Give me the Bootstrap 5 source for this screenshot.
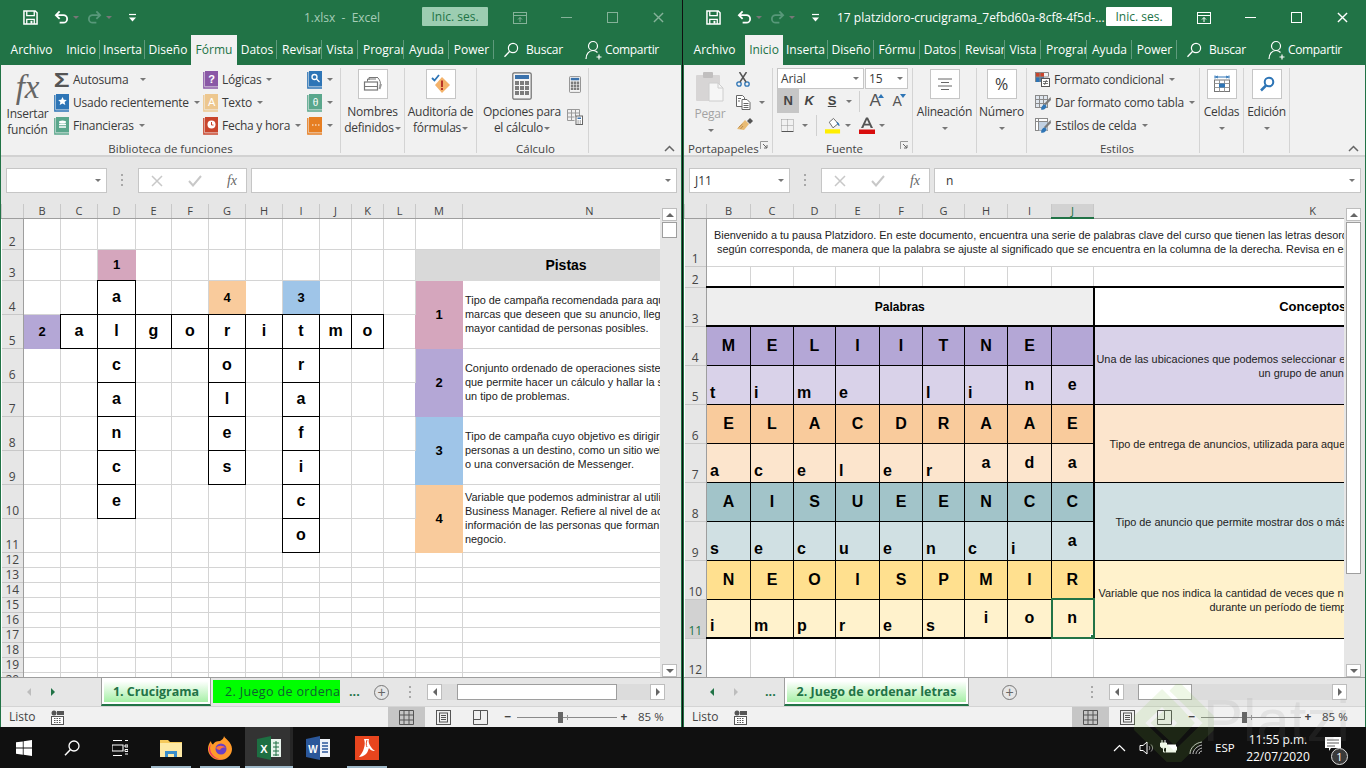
<!DOCTYPE html>
<html lang="es">
<head>
<meta charset="utf-8">
<title>Excel</title>
<link href="https://cdn.jsdelivr.net/npm/bootstrap@5.3.0/dist/css/bootstrap.min.css" rel="stylesheet">
<style>
html,body{margin:0;width:1366px;height:768px;overflow:hidden;background:#101010}
body{font-family:"Open Sans","Noto Sans",sans-serif;font-size:12px;color:#333;position:relative}
.desk{height:727px}
.win{height:727px;border:1px solid #217346;border-top-width:0;background:#f1f1f1;flex:none}
.win-a{width:682px;margin-right:1px}
.win-b{width:683px}
.ttlbar{height:35px;background:#217346;color:#fff;flex:none}
.qat{width:135px;flex:none;padding-left:22px;gap:0}
.qat svg{display:block;flex:none}
.wcrt{border-top-color:#fff}
.fade-g{color:#58987a}
.fade-c{border-top-color:#58987a}
.ttl{flex:1 1 0;white-space:nowrap;overflow:hidden;font-size:12px}
.ttl-a{padding-left:168px;color:#a6cdb8}
.ttl-b{padding-left:18px}
.signin{width:66px;height:19px;line-height:19px;text-align:center;border-radius:1px;font-size:12px;background:#fff;color:#217346;margin:0 9px 2px 0;flex:none}
.win-a .signin{background:#9ccdb1;color:#217346}
.wbtn{width:46px;height:35px;flex:none}
.fade-w{opacity:.45}
.tabsx{height:30px;background:#217346;flex:none;color:#fff}
.tabsx .nav{flex-wrap:nowrap}
.tabsx .nav-item{height:30px;line-height:30px;text-align:center;white-space:nowrap;overflow:hidden;position:relative;font-size:12px}
.tabsx .nav-item::after{content:"";position:absolute;right:0;top:5px;bottom:6px;width:1px;background:#5f9a7c}
.tabsx .nav-item:nth-child(1){width:61px}
.tabsx .nav-item:nth-child(1)::after{display:none}
.tabsx .nav-item:nth-child(2){width:38px}
.tabsx .nav-item:nth-child(3){width:45px}
.tabsx .nav-item:nth-child(4){width:46px}
.tabsx .nav-item:nth-child(5){width:46px}
.tabsx .nav-item:nth-child(6){width:40px}
.tabsx .nav-item:nth-child(7){width:45px;text-align:left;padding-left:5px}
.tabsx .nav-item:nth-child(8){width:36px}
.tabsx .nav-item:nth-child(9){width:46px;text-align:left;padding-left:5px}
.tabsx .nav-item:nth-child(10){width:45px}
.tabsx .nav-item:nth-child(11){width:45px}
.tabsx .nav-item.on{background:#f1f1f1;color:#217346}
.tabsx .nav-item.on::after,.tabsx .nav-item.preon::after{display:none}
.srch{margin-left:9px;width:82px;gap:7px;flex:none;letter-spacing:-.2px}
.shr{gap:2px;flex:none;letter-spacing:-.35px}
.rib{height:92px;background:#f1f1f1;border-bottom:2px solid #d2d2d2;flex:none;padding-top:3px;position:relative;white-space:nowrap;color:#3a3a3a;letter-spacing:-.25px}
.grp{height:85px;border-right:1px solid #d4d4d4;flex:none;position:relative}
.gbody{height:73px}
.glab{height:16px;line-height:16px;text-align:center;font-size:11.5px;color:#444;letter-spacing:0}
.g1{width:340px}.g2{width:64px}.g3{width:72px}.g4{width:112px;padding-left:6px}
.g5{width:89px}.g6{width:140px}.g7{width:64px}.g8{width:50px}.g9{width:173px}.g10{width:44px}.g11{width:46px}
.big{line-height:16px;text-align:center;font-size:12px}
.bigbox{width:30px;height:30px;background:#fff;border:1px solid #c6c6c6;margin:1px auto 5px;display:flex;align-items:center;justify-content:center}
.fxbig{font-family:"Liberation Serif",serif;font-style:italic;font-size:33px;line-height:38px;height:38px;color:#666;display:block}
.col1{width:53px;text-align:center;line-height:16px;flex:none}
.rrow{height:23px;gap:4px;flex:none}
.rrow svg{flex:none}
.stack{flex:none}
.w149{width:149px}.w104{width:104px}
.sig{font-family:"Liberation Sans",sans-serif;font-weight:700;font-size:21px;line-height:20px;color:#555;width:15px;text-align:center;display:inline-block;transform:scaleX(1.25)}
.crt{display:inline-block;width:0;height:0;border-left:3px solid transparent;border-right:3px solid transparent;border-top:3px solid #777;flex:none;margin-left:1px;vertical-align:middle}
.chev{position:absolute;right:6px;bottom:3px;display:block}
.lnch{position:absolute;right:3px;bottom:3px;display:block}
.fbk-blue{color:#2e75b6}.fbk-green{color:#5aa78c}.fbk-purple{color:#8a58a6}.fbk-beige{color:#edc78f}.fbk-red{color:#c9452c}.fbk-orange{color:#e67e22}
.col-calc{flex:none}
.calc2{margin-left:6px}
.col-paste{width:52px;flex:none;color:#a3a3a3}
.paste-i{margin:4px auto 4px;opacity:.85}
.combo{height:21px;background:#fff;border:1px solid #c6c6c6;padding:0 4px 0 3px;flex:none;font-size:12px;letter-spacing:-.1px}
.cb-a{width:87px}.cb-b{width:43px;margin-left:1px}
.fbtn{height:24px;font-family:"Liberation Sans",sans-serif;font-weight:700;font-size:13px;color:#444;flex:none;text-align:center;line-height:24px}
.fn{width:22px;background:#c6c6c6}
.fk{width:20px;font-style:italic}
.fs{width:26px;text-decoration:underline}
.vsep{width:1px;height:21px;background:#d0d0d0;flex:none}
.fsep1{margin-left:7px}
.fbtn.fa1{width:12px;margin-left:9px;font-weight:400;font-size:17px;color:#555}
.fbtn.fa2{width:12px;margin-left:7px;font-weight:400;font-size:14px;color:#555}
.fup{align-self:flex-start;margin-top:5px;margin-left:-3px;flex:none}
.rowf{height:24px}
.rowf .crt1{margin-left:8px}
.fbar{height:47px;background:#e6e6e6;flex:none;padding:11px 4px 0 5px}
.namebox{width:101px;height:25px;background:#fff;border:1px solid #c6c6c6;padding:0 5px;font-size:12px;flex:none}
.dots3{width:31px;height:25px;flex:none}
.fxbox{width:109px;height:25px;background:#fff;border:1px solid #c6c6c6;flex:none;padding:0 9px 0 12px;margin-right:4px}
.fx-i{color:#c8c8c8}
.fxsm{font-family:"Liberation Serif",serif;font-style:italic;font-size:14px;color:#666}
.finput{height:25px;background:#fff;border:1px solid #c6c6c6;flex:1 1 0;padding:0 5px 0 11px;font-size:12px}
.sheetwrap{height:473px;flex:none;overflow:hidden}
.xclip{overflow:hidden;height:473px;flex:1 1 0}
table.xg{table-layout:fixed;border-collapse:collapse;font-family:"Liberation Sans",sans-serif;background:#fff;color:#000}
.xg td,.xg th{padding:0;border:1px ridge #d4d4d4;overflow:hidden;white-space:nowrap;line-height:1;font-weight:400}
.xg th{background:#e6e6e6;color:#444;font-family:"Open Sans",sans-serif;font-size:11px}
.xg th.ch{text-align:center;vertical-align:middle;border-color:#c8c8c8;border-top:0;border-bottom:1px solid #9e9e9e;height:14px}
.xg th.rh{text-align:center;vertical-align:bottom;border-color:#c8c8c8;border-left:0;border-right:1px solid #9e9e9e;font-size:12px;line-height:14px}
.xg th.act{background:#d2d2d2;color:#217346}
.xg th.ch.act{border-bottom:2px solid #217346}
.xa col:nth-child(1){width:22px}.xa col:nth-child(2){width:37px}.xa col:nth-child(3){width:37px}.xa col:nth-child(4){width:38px}
.xa col:nth-child(5){width:36px}.xa col:nth-child(6){width:37px}.xa col:nth-child(7){width:37px}.xa col:nth-child(8){width:37px}
.xa col:nth-child(9){width:37px}.xa col:nth-child(10){width:32px}.xa col:nth-child(11){width:32px}.xa col:nth-child(12){width:32px}
.xa col:nth-child(13){width:47px}.xa col:nth-child(14){width:254px}
.xa{width:715px}
.xb col:nth-child(1){width:22px}.xb col:nth-child(2){width:44px}.xb col:nth-child(3){width:43px}.xb col:nth-child(4){width:42px}
.xb col:nth-child(5){width:44px}.xb col:nth-child(6){width:43px}.xb col:nth-child(7){width:42px}.xb col:nth-child(8){width:43px}
.xb col:nth-child(9){width:44px}.xb col:nth-child(10){width:42px}.xb col:nth-child(11){width:438px}
.xb{width:847px}
.h14{height:14px}.h21{height:21px}.h31{height:31px}.h34{height:34px}.h39{height:39px}.h48{height:48px}
.xg td.lt{font-weight:700;font-size:16px;text-align:center;vertical-align:middle}
.xg td.bx{border:1px solid #000}
.xg td.nm{font-weight:700;font-size:13px;text-align:center;vertical-align:middle}
.xg td.lf{text-align:left;vertical-align:bottom;padding-left:3px;padding-bottom:3px}
.xg td.tx{font-size:10.9px;line-height:14px;padding-left:2px;vertical-align:middle;text-align:left;color:#222}
.xg td.txk{font-size:10.9px;line-height:14px;padding-top:2px;vertical-align:middle;text-align:left;color:#222}
.txk span{display:block}
.mk3{margin-left:2px}.mk165{margin-left:164px}.mk16{margin-left:15px}.mk22{margin-left:21px}.mk5{margin-left:4px}.mk116{margin-left:115px}
.xg td.ttc{font-size:10.9px;line-height:14px;padding-left:7px;vertical-align:middle;text-align:left;color:#222}
.line2{margin-left:3px}
.xg td.hd{font-weight:700;font-size:14px;text-align:center;vertical-align:middle}
.xb td.pal{font-size:12px}
.xb td.cpt{font-size:13px}
.pnk{background:#d5a6bd}.pur{background:#b4a7d6}.blu{background:#9fc5e8}.org{background:#f9cb9c}.gry{background:#d9d9d9}
.xg td.pnk{border-color:#d5a6bd}.xg td.pur{border-color:#b4a7d6}.xg td.blu{border-color:#9fc5e8}.xg td.org{border-color:#f9cb9c}.xg td.gry{border-color:#d9d9d9}
.xg td.pur2{background:#d9d2e9}.xg td.org2{background:#fce5cd}.xg td.tea{background:#a2c4c9}.xg td.tea2{background:#d0e0e3}.xg td.yel{background:#ffe08f}.xg td.yel2{background:#fff2cc}
.xb td.pur,.xb td.org,.xb td.tea,.xb td.tea2,.xb td.pur2,.xb td.org2,.xb td.yel,.xb td.yel2{border:1px solid #000}
.xb td.gy2{background:#eee;border-color:#000}
.xg td.tt{border-top:2px solid #000}
.xg td.tb{border-bottom:2px solid #000}
.xg td.rr{border-right:2px solid #000}
.xg td.ll{border-left:2px solid #000}
.xg td.sel{position:relative;outline:2px solid #217346;outline-offset:-1px}
.handle{position:absolute;right:-3px;bottom:-3px;width:6px;height:6px;background:#217346;border:1px solid #fff}
.selwrap{position:relative;display:block;line-height:1}
.vbar{width:21px;flex:none;background:#e6e6e6;padding:4px 2px 0 2px;height:473px}
.sbtn{width:15px;height:13px;background:#fff;border:1px solid #bdbdbd;flex:none}
.vthumb{width:15px;background:#fff;border:1px solid #9e9e9e;margin-top:1px;flex:none}
.vt-a{height:16px}.vt-b{height:352px}
.spacer{flex:1 1 0}
.tri-u{border-left:4px solid transparent;border-right:4px solid transparent;border-bottom:4px solid #666;width:0;height:0}
.tri-d{border-left:4px solid transparent;border-right:4px solid transparent;border-top:4px solid #666;width:0;height:0}
.tri-l{border-top:4px solid transparent;border-bottom:4px solid transparent;border-right:4px solid #666;width:0;height:0}
.tri-r{border-top:4px solid transparent;border-bottom:4px solid transparent;border-left:4px solid #666;width:0;height:0}
.tri-l.tgo{border-right-color:#217346}.tri-r.tgo{border-left-color:#217346}
.tri-l.tfd{border-right-color:#bdbdbd}.tri-r.tfd{border-left-color:#bdbdbd}
.tabbar{height:29px;background:#e6e6e6;border-top:1px solid #9e9e9e;flex:none;font-size:12.5px;position:relative}
.arrsx{gap:20px;padding-left:26px;flex:none;width:100px}
.arrsx .ell{margin-left:7px}
.stab{height:28px;margin-top:-1px;background:#fff;border-left:1px solid #9e9e9e;border-right:1px solid #9e9e9e;border-bottom:2px solid #217346;padding:3px 2px 1px;flex:none}
.stab span{display:block;height:21px;line-height:21px;text-align:center;background:linear-gradient(#fff,#a6f0a6);color:#217346;font-weight:700;white-space:nowrap}
.st-a{width:110px}.st-b{width:185px}
.gtab{width:127px;height:23px;line-height:23px;background:#00ff00;color:#0f5f30;margin:0 9px 3px 2px;flex:none;padding-left:12px;overflow:hidden;white-space:nowrap;align-self:flex-end;letter-spacing:.35px}
.ell{color:#217346;font-weight:700;flex:none;line-height:20px}
.ell-a{width:25px}
.plus{width:15px;height:15px;border:1px solid #777;border-radius:50%;color:#666;text-align:center;line-height:12px;font-size:14px;flex:none;font-family:"Liberation Sans",sans-serif}
.pl-b{margin-left:33px}
.dotsv{width:3px;flex:none;display:block}
.dv-a{margin-left:20px;margin-right:15px}
.dv-b{margin-left:74px;margin-right:15px}
.hsb{height:16px;flex:none;background:#dcdcdc;width:238px}
.hsb-btn{width:15px;height:16px;background:#fff;border:1px solid #bdbdbd;flex:none}
.hthumb{height:16px;background:#fff;border:1px solid #9e9e9e;flex:none}
.ht-a{width:160px;margin-left:15px;margin-right:33px}
.ht-b{width:54px;margin-left:14px;margin-right:140px}
.stbar{height:21px;background:#f1f1f1;border-top:1px solid #d4d4d4;flex:none;font-size:12px;color:#444}
.mcr-i{margin-left:15px;flex:none}
.vw{width:37px;height:21px;flex:none}
.vw-on{background:#c6c6c6}
.slider{width:100px;height:1px;background:#8a8a8a;position:relative;flex:none}
.slthumb{position:absolute;left:41px;top:-5px;width:5px;height:11px;background:#666}
.sltick{position:absolute;left:50px;top:-2px;width:1px;height:5px;background:#999}
.zm{width:18px;text-align:center;flex:none;font-weight:700}
.zp{width:14px;text-align:center;flex:none;font-weight:700}
.zv{width:28px;margin:0 15px 0 7px;white-space:nowrap;font-size:11.5px;flex:none}
.taskb{height:41px;background:#101010;color:#fff;position:relative}
.tk{width:48px;height:41px;flex:none;position:relative}
.tk-on{background:#333;box-shadow:inset -3px 0 #262626;margin-left:1px}
.tk-u::after{content:"";position:absolute;left:4px;right:4px;bottom:0;height:2px;background:#9fb9c9}
.tk-on::after{left:0;right:0}
.tk-m3{margin-left:3px}.tk-m1{margin-left:1px}
.tray{font-size:12px}
.tr-a{margin-right:13px}.tr-b{margin-right:5px}.tr-c{margin-right:12px}
.esp{width:23px;font-size:11.5px;flex:none}
.clock{text-align:center;line-height:17px;font-size:12px;width:80px}
.ntf{position:relative;width:48px;height:41px;padding-right:18px}
.ntfb{position:absolute;left:13px;top:21px;width:17px;height:17px;border-radius:50%;background:#3a3a3a;border:1px solid #ddd;font-size:11px;line-height:15px;text-align:center}
.wm{position:absolute;left:1130px;top:684px;width:236px;height:84px;pointer-events:none;overflow:hidden}
.wmt{position:absolute;left:73px;top:-3px;font-family:"Liberation Sans",sans-serif;font-size:60px;line-height:80px;color:rgba(130,130,130,.13)}
.wmd{position:absolute;left:4px;top:0}
</style>
</head>
<body>
<svg width="0" height="0" class="position-absolute">
<symbol id="save" viewBox="0 0 16 16"><path d="M1 1h12l2 2v12H1z" fill="none" stroke="#fff" stroke-width="1.6"/><path d="M4 1v5h8V1M4 15v-5h8v5" fill="none" stroke="#fff" stroke-width="1.4"/><rect x="8" y="11.5" width="2" height="3" fill="#fff"/></symbol>
<symbol id="undo" viewBox="0 0 16 16"><path d="M6 1.5 2 5.5l4 4M2.500 5.500H10a4 4 0 0 1 0 8H6" fill="none" stroke="currentColor" stroke-width="1.9"/></symbol>
<symbol id="redo" viewBox="0 0 16 16"><path d="M10 1.5l4 4-4 4M13.500 5.500H6a4 4 0 0 0 0 8h4" fill="none" stroke="currentColor" stroke-width="1.9"/></symbol>
<symbol id="qatc" viewBox="0 0 9 9"><path d="M1 1.500h7" stroke="#fff" stroke-width="1.2"/><path d="M1 4.500h7L4.500 8.500z" fill="#fff"/></symbol>
<symbol id="lens" viewBox="0 0 16 16"><circle cx="10" cy="6" r="4.600" fill="none" stroke="#fff" stroke-width="1.2"/><path d="M6.700 9.300 1.500 14.800" stroke="#fff" stroke-width="1.300"/></symbol>
<symbol id="user" viewBox="0 0 18 20"><circle cx="8" cy="6" r="4.500" fill="none" stroke="#fff" stroke-width="1.200"/><path d="M1 19c0-5 3-8.500 7-8.500 2 0 3.500.8 4.500 2" fill="none" stroke="#fff" stroke-width="1.200"/><path d="M14 14.500v5M11.500 17h5" stroke="#fff" stroke-width="1.200"/></symbol>
<symbol id="ribd" viewBox="0 0 14 14"><rect x=".5" y="1.500" width="13" height="11" fill="none" stroke="currentColor"/><path d="M1 4.500h12M7 11V6.500M5 8.500l2-2 2 2" fill="none" stroke="currentColor"/></symbol>
<symbol id="book" viewBox="0 0 15 18"><path d="M.8 1v16H15" fill="none" stroke="currentColor" stroke-width="1.300"/><rect x="2" y="0" width="13" height="15.500" fill="currentColor"/></symbol>
<symbol id="names" viewBox="0 0 20 18"><path d="M6 5V2.500h9M4.500 6.500V4H13M15 3c2 2 3 5 2 8" fill="none" stroke="#777"/><rect x="1.500" y="7" width="13" height="8" fill="#fff" stroke="#777" stroke-width="1.200"/><path d="M1.500 11.500h13" stroke="#777"/><path d="M16.500 14l1.500-5" stroke="#999" stroke-width="2"/></symbol>
<symbol id="audit" viewBox="0 0 20 20"><path d="M1 4l2.500 2.500L8 1" fill="none" stroke="#2e75b6" stroke-width="1.800"/><path d="M11 3l8 8-8 8-7-8z" fill="#f4b26a"/><rect x="10" y="6.500" width="2" height="6.500" fill="#b8342a"/><rect x="10" y="14" width="2" height="2" fill="#b8342a"/></symbol>
<symbol id="calc" viewBox="0 0 20 28"><rect x=".8" y=".8" width="18.400" height="26.400" rx="1.500" fill="#f4f4f4" stroke="#6f6f6f" stroke-width="1.200"/><rect x="3" y="3" width="14" height="4" fill="#3b72ac"/><path d="M3 9h4v4H3zM8 9h4v4H8zM13 9h4v4h-4zM3 14h4v4H3zM8 14h4v4H8zM13 14h4v4h-4zM3 19h4v4H3zM8 19h4v4H8zM13 19h4v4h-4z" fill="#7c7c7c"/></symbol>
<symbol id="calcg" viewBox="0 0 16 16"><path d="M.5.5h12v9M.5.5v11h7M.5 4h12M.5 8h7M4.500.5v11M8.500.5v7" fill="none" stroke="#999"/><rect x="9" y="7" width="6.500" height="8.500" fill="#fff" stroke="#666"/><rect x="10.500" y="8.500" width="3.500" height="1.500" fill="#3b72ac"/><path d="M10.500 11.500h1.200v1h-1.200zM12.700 11.500h1.200v1h-1.200zM10.500 13.500h1.200v1h-1.200zM12.700 13.500h1.200v1h-1.200z" fill="#666"/></symbol>
<symbol id="paste" viewBox="0 0 28 30"><rect x="0" y="3" width="24" height="26" rx="1" fill="#d3d1d1"/><rect x="7" y="0" width="10" height="6" rx="1" fill="#b9b7b7"/><path d="M13 11h9l5 5v13H13z" fill="#f7f7f7" stroke="#c8c8c8"/><path d="M22 11v5h5" fill="none" stroke="#c8c8c8"/></symbol>
<symbol id="scis" viewBox="0 0 14 15"><circle cx="3" cy="12" r="2.200" fill="none" stroke="#2e75b6" stroke-width="1.300"/><circle cx="11" cy="12" r="2.200" fill="none" stroke="#2e75b6" stroke-width="1.300"/><path d="M4 10 10.500 0M10 10 3.500 0" stroke="#555" stroke-width="1.500"/></symbol>
<symbol id="copy" viewBox="0 0 15 15"><path d="M.5.500h6l2 2v9h-8z" fill="#fff" stroke="#666"/><path d="M6 4.500h5l3 3v7H6z" fill="#fff" stroke="#666"/><path d="M2 3.500h3M2 6h2M7.500 8.500h5M7.500 10.500h5M7.500 12.500h5" stroke="#666"/></symbol>
<symbol id="brush" viewBox="0 0 17 15"><path d="M9 2 13 6 8 12 1 11z" fill="#e8bb74"/><path d="M11 3 14 0l3 3-3 3z" fill="#555"/><path d="M2.500 9.500 6.500 6M4.500 11 7 8" stroke="#b8884a"/></symbol>
<symbol id="bord" viewBox="0 0 13 13"><path d="M.5 12.500h12" stroke="#555"/><path d="M.5.500h12v12M.5.500v12M6.500.500v12M.5 6.500h12" fill="none" stroke="#999" stroke-dasharray="1 1"/></symbol>
<symbol id="fill" viewBox="0 0 17 17"><path d="M4.500 5 9 1l5 5.500-5.500 4.500z" fill="#fff" stroke="#666"/><path d="M12 4.500c2 .5 3.500 2 3.500 4.500-1.500 0-2.500-2-3.500-4.500z" fill="#2e75b6"/><rect x="0" y="12.500" width="16" height="4.500" fill="#ffee00"/></symbol>
<symbol id="fcol" viewBox="0 0 16 17"><path d="M2 11 7 0.500h2L14 11h-2.300l-1-2.500H5.300L4.300 11zM6.100 6.700h3.800L8 2.700z" fill="#555"/><rect x="0" y="12.500" width="16" height="4.500" fill="#d80d0d"/></symbol>
<symbol id="alng" viewBox="0 0 14 12"><path d="M0 1h14M3 4.500h8M0 8h14M3 11.500h8" stroke="#666" stroke-width="1"/></symbol>
<symbol id="cfmt" viewBox="0 0 15 15"><rect x="0" y="0" width="9" height="5" fill="#c9452c"/><rect x="0" y="5" width="9" height="5" fill="#2e75b6"/><path d="M.5.500h13v4M.5 5h13M5 .5v9.500M.5.500v9.500" fill="none" stroke="#888"/><rect x="6.500" y="6.500" width="8" height="8" fill="#fff" stroke="#555"/><path d="M8 9.500h5M8 11.500h5M11.500 8l-2 5" stroke="#555" stroke-width=".8"/></symbol>
<symbol id="tfmt" viewBox="0 0 16 16"><rect x=".5" y=".5" width="12" height="12" fill="#dfe6ee" stroke="#8a8a8a"/><path d="M.5 4.500h12M.5 8.500h12M4.500.5v12M8.500.5v12" stroke="#8a8a8a"/><path d="M15.500 2 9 9l1.500 1.500L16 5z" fill="#7c7c7c"/><path d="M10 9.500c-2 0-4 2-4 5 3 1 5.500-1.500 5.500-3.500z" fill="#2e75b6"/></symbol>
<symbol id="sfmt" viewBox="0 0 16 16"><rect x=".5" y=".5" width="12" height="12" fill="#fff" stroke="#8a8a8a"/><path d="M.5 3.500h12M3.500.5v12" stroke="#8a8a8a"/><rect x="4" y="4" width="8.500" height="8.500" fill="#c2d2e4"/><path d="M15.500 2 9 9l1.500 1.500L16 5z" fill="#7c7c7c"/><path d="M10 9.500c-2 0-4 2-4 5 3 1 5.500-1.500 5.500-3.500z" fill="#2e75b6"/></symbol>
<symbol id="cell" viewBox="0 0 16 18"><path d="M1 2h14M1 .5v3M15 .5v3M4 1l-2 1 2 1M12 1l2 1-2 1" fill="none" stroke="#2e75b6"/><rect x=".5" y="5" width="15" height="11.500" fill="#fff" stroke="#777"/><path d="M.5 8.500h15M.5 12.500h15M5.500 5v11.500M10.500 5v11.500" stroke="#999"/><rect x="5" y="8.500" width="6" height="4" fill="#2e75b6"/></symbol>
<symbol id="find" viewBox="0 0 16 16"><circle cx="10" cy="6" r="4.300" fill="none" stroke="#2e75b6" stroke-width="2"/><path d="M7 9.500 2 14.500" stroke="#2e75b6" stroke-width="2.500"/></symbol>
<symbol id="launch" viewBox="0 0 9 9"><path d="M.5 8V.5H8" fill="none" stroke="#999"/><path d="M3 3l4 4M7 4v3H4" fill="none" stroke="#666"/></symbol>
<symbol id="up" viewBox="0 0 11 7"><path d="M1 6 5.500 1.500 10 6" fill="none" stroke="#666" stroke-width="1.500"/></symbol>
<symbol id="x" viewBox="0 0 12 12"><path d="M1 1l10 10M11 1 1 11" stroke="currentColor" stroke-width="1.500"/></symbol>
<symbol id="chk" viewBox="0 0 14 12"><path d="M1 6l4 4.500L13 1" fill="none" stroke="currentColor" stroke-width="2"/></symbol>
<symbol id="vd3" viewBox="0 0 3 13"><rect x="0" y="0" width="2" height="2" fill="#a8a8a8"/><rect x="0" y="5" width="2" height="2" fill="#a8a8a8"/><rect x="0" y="10" width="2" height="2" fill="#a8a8a8"/></symbol>
<symbol id="mcr" viewBox="0 0 13 15"><circle cx="3" cy="3" r="2.500" fill="#555"/><rect x="6" y="1" width="7" height="4" fill="#555"/><rect x=".5" y="6.500" width="12" height="8" fill="#fff" stroke="#555"/><path d="M3 8.500h7M3 10.500h7M3 12.500h7" stroke="#555" stroke-dasharray="1.500 1"/></symbol>
<symbol id="vnorm" viewBox="0 0 15 15"><path d="M.5.5h14v14H.5zM.5 5h14M.5 10h14M5 .5v14M10 .5v14" fill="none" stroke="#555"/></symbol>
<symbol id="vpage" viewBox="0 0 15 15"><rect x=".5" y=".5" width="14" height="14" fill="none" stroke="#555"/><rect x="3.500" y="3" width="8" height="9" fill="none" stroke="#555"/><path d="M5 5.500h5M5 7.500h5M5 9.500h5" stroke="#555"/></symbol>
<symbol id="vbrk" viewBox="0 0 15 15"><path d="M.5.5h14v14H.5zM.5 9.500h7M7.500.5v9" fill="none" stroke="#555"/></symbol>
<symbol id="winl" viewBox="0 0 16 16"><path d="M0 2.300 6.800 1.400v6.200H0zM7.600 1.300 16 0v7.600H7.600zM0 8.400h6.800v6.300L0 13.800zM7.600 8.400H16V16l-8.400-1.200z" fill="#fff"/></symbol>
<symbol id="srch" viewBox="0 0 16 16"><circle cx="10" cy="6" r="5" fill="none" stroke="#fff" stroke-width="1.300"/><path d="M6.500 9.500 1 15.300" stroke="#fff" stroke-width="1.500"/></symbol>
<symbol id="tv" viewBox="0 0 16 16"><path d="M1 .5h9M1 15.500h9M0 5h11v6H0z" fill="none" stroke="#fff" stroke-width="1.100"/><path d="M13 .5h3M13 5h3v2h-3zM13 9.500h3v2h-3zM13 14h3" fill="none" stroke="#fff" stroke-width="1"/></symbol>
<symbol id="fold" viewBox="0 0 22 20"><path d="M0 2h8l2 2h12v14H0z" fill="#f5c95c"/><rect x="0" y="5" width="22" height="14" fill="#fde9a5"/><path d="M5 19v-6h12v6h-3v-3H8v3z" fill="#3a8ecb"/></symbol>
<symbol id="ffx" viewBox="0 0 24 24"><path d="M16 0c1 3 8 6 8 13a12 11 0 0 1-24 0c0-3 1-6 3-8 0 2 1 3 2 3.500C6 6 9 5 12 5c2-1 4-3 4-5z" fill="#ff9a2a"/><path d="M3 8a12 11 0 0 0 13 15c-7 2-15-3-15-10 0-2 1-4 2-5z" fill="#ee2f66"/><circle cx="13" cy="13" r="5.500" fill="#6a3fc4"/><path d="M8 12c2-3 7-3 10 0-3-1-5 0-6 2-2 0-3-1-4-2z" fill="#ff7139"/></symbol>
<symbol id="xls" viewBox="0 0 24 24"><path d="M0 3 14 0v24L0 21z" fill="#1d6f42"/><rect x="14" y="3" width="10" height="18" fill="#e8f3ec"/><path d="M16 7h6M16 11h6M16 15h6M16 19h6M19 5v15" stroke="#1d6f42" stroke-width="1"/></symbol>
<symbol id="wrd" viewBox="0 0 24 24"><path d="M0 3 14 0v24L0 21z" fill="#2b579a"/><rect x="14" y="3" width="10" height="18" fill="#eef2f8"/><path d="M16 7h6M16 10h6M16 13h6M16 16h6" stroke="#2b579a" stroke-width="1.300"/></symbol>
<symbol id="acro" viewBox="0 0 24 24"><rect width="24" height="24" fill="#e8451e"/><path d="M4 21c2-3 4-5 5-9 1-3 1-6 0-9h5c-1 3 0 5 2 8 1 2 3 3 4 4-3 0-5-1-6-3-1 2-1 4-3 6-2 2-5 3-7 3z" fill="#fff"/><path d="M12 4c-1 3-1 5 0 7" stroke="#e8451e" fill="none"/></symbol>
<symbol id="spk" viewBox="0 0 16 16"><path d="M1 5.500h3L8 2v12L4 10.500H1z" fill="none" stroke="#fff"/><path d="M10 6c1 1 1 3 0 4M12 4.500c2 2 2 5 0 7" fill="none" stroke="#999"/></symbol>
<symbol id="plug" viewBox="0 0 17 15"><path d="M2 0v3M5 0v3M.5 3h6v3c0 1-1 2-3 2s-3-1-3-2z" fill="#fff" stroke="#fff"/><path d="M3.500 8v4h2" fill="none" stroke="#fff"/><rect x="6" y="4.500" width="10" height="8" fill="#fff"/><rect x="16" y="6.500" width="1" height="4" fill="#fff"/></symbol>
<symbol id="wifi" viewBox="0 0 14 14"><path d="M1 13C1 7 6 2 13 1M4 13c0-4 4-8 9-9M7 13c0-2 2-5 6-6M10 13c0-1 1-3 3-3" fill="none" stroke="#ddd" stroke-width=".9"/></symbol>
<symbol id="note" viewBox="0 0 16 14"><path d="M0 0h16v11H6l-2 3v-3H0z" fill="#fff"/><path d="M2 3h12M2 6h12M2 9h8" stroke="#333" stroke-width=".8"/></symbol>
</svg>

<div class="desk d-flex">
<!-- LEFT WINDOW -->
<section class="win win-a d-flex flex-column">
 <div class="ttlbar d-flex align-items-center">
  <div class="qat d-flex align-items-center">
   <svg width="15" height="15"><use href="#save"/></svg>
   <svg width="15" height="15" class="text-white ms-3"><use href="#undo"/></svg>
   <span class="crt ms-1 wcrt"></span>
   <svg width="15" height="15" class="ms-2 fade-g"><use href="#redo"/></svg>
   <span class="crt ms-1 fade-c"></span>
   <svg width="9" height="9" class="ms-3"><use href="#qatc"/></svg>
  </div>
  <div class="ttl ttl-a">1.xlsx &nbsp;-&nbsp; Excel</div>
  <div class="signin">Inic. ses.</div>
  <div class="wbtn d-flex align-items-center justify-content-center fade-w"><svg width="14" height="14" class="text-white"><use href="#ribd"/></svg></div>
  <div class="wbtn d-flex align-items-center justify-content-center fade-w"><svg width="11" height="2" class="text-white"><rect width="11" height="1" fill="#fff"/></svg></div>
  <div class="wbtn d-flex align-items-center justify-content-center fade-w"><svg width="11" height="11"><rect x=".5" y=".5" width="10" height="10" fill="none" stroke="#fff"/></svg></div>
  <div class="wbtn d-flex align-items-center justify-content-center fade-w"><svg width="11" height="11" class="text-white"><use href="#x"/></svg></div>
 </div>
 <div class="tabsx d-flex">
  <ul class="nav list-unstyled m-0">
   <li class="nav-item">Archivo</li><li class="nav-item">Inicio</li><li class="nav-item">Inserta</li><li class="nav-item preon">Diseño</li><li class="nav-item on">Fórmu</li><li class="nav-item">Datos</li><li class="nav-item">Revisar</li><li class="nav-item">Vista</li><li class="nav-item">Program</li><li class="nav-item">Ayuda</li><li class="nav-item">Power</li>
  </ul>
  <div class="srch d-flex align-items-center"><svg width="16" height="16"><use href="#lens"/></svg><span>Buscar</span></div>
  <div class="shr d-flex align-items-center"><svg width="18" height="20"><use href="#user"/></svg><span>Compartir</span></div>
 </div>
 <div class="rib d-flex">
  <div class="grp g1">
   <div class="gbody d-flex">
    <div class="col1 big"><span class="fxbig">fx</span><div>Insertar<br>función</div></div>
    <div class="stack w149">
     <div class="rrow d-flex align-items-center"><span class="sig">Σ</span><span>Autosuma</span><span class="crt ms-2"></span></div>
     <div class="rrow d-flex align-items-center"><svg width="15" height="18" class="fbk-blue"><use href="#book"/><path d="M8.500 3l1.300 2.700 3 .3-2.200 2 .7 3-2.800-1.600L5.700 11l.7-3-2.200-2 3-.3z" fill="#fff"/></svg><span>Usado recientemente</span><span class="crt"></span></div>
     <div class="rrow d-flex align-items-center"><svg width="15" height="18" class="fbk-green"><use href="#book"/><ellipse cx="8.500" cy="5" rx="3.500" ry="1.500" fill="#fff"/><path d="M5 7.500h7M5 10h7" stroke="#fff" stroke-width="1.300"/></svg><span>Financieras</span><span class="crt"></span></div>
    </div>
    <div class="stack w104">
     <div class="rrow d-flex align-items-center"><svg width="15" height="18" class="fbk-purple"><use href="#book"/><text x="8.500" y="12" text-anchor="middle" font-size="11" font-family="Liberation Sans" font-weight="700" fill="#fff">?</text></svg><span>Lógicas</span><span class="crt"></span></div>
     <div class="rrow d-flex align-items-center"><svg width="15" height="18" class="fbk-beige"><use href="#book"/><text x="8.500" y="12" text-anchor="middle" font-size="11" font-family="Liberation Sans" fill="#fff">A</text></svg><span>Texto</span><span class="crt"></span></div>
     <div class="rrow d-flex align-items-center"><svg width="15" height="18" class="fbk-red"><use href="#book"/><circle cx="8.500" cy="7.500" r="4" fill="#fff"/><path d="M8.500 5v3h2" fill="none" stroke="#c9452c"/></svg><span>Fecha y hora</span><span class="crt"></span></div>
    </div>
    <div class="stack">
     <div class="rrow d-flex align-items-center"><svg width="15" height="18" class="fbk-blue"><use href="#book"/><circle cx="7.500" cy="6" r="2.500" fill="none" stroke="#fff" stroke-width="1.300"/><path d="M9.500 8l3 3" stroke="#fff" stroke-width="1.300"/></svg><span class="crt"></span></div>
     <div class="rrow d-flex align-items-center"><svg width="15" height="18" class="fbk-green"><use href="#book"/><text x="8.500" y="12" text-anchor="middle" font-size="10" font-family="Liberation Sans" fill="#fff">θ</text></svg><span class="crt"></span></div>
     <div class="rrow d-flex align-items-center"><svg width="15" height="18" class="fbk-orange"><use href="#book"/><path d="M5 8h1.500M8 8h1.500M11 8h1.500" stroke="#fff"/></svg><span class="crt"></span></div>
    </div>
   </div>
   <div class="glab">Biblioteca de funciones</div>
  </div>
  <div class="grp g2"><div class="gbody big"><div class="bigbox"><svg width="20" height="18"><use href="#names"/></svg></div>Nombres<br>definidos<span class="crt"></span></div></div>
  <div class="grp g3"><div class="gbody big"><div class="bigbox"><svg width="20" height="20"><use href="#audit"/></svg></div>Auditoría de<br>fórmulas<span class="crt"></span></div></div>
  <div class="grp g4">
   <div class="gbody d-flex">
    <div class="big col-calc"><svg width="20" height="28" class="d-block mx-auto mt-1 mb-1"><use href="#calc"/></svg>Opciones para<br>el cálculo<span class="crt"></span></div>
    <div class="calc2 d-flex flex-column align-items-center gap-3 pt-2"><svg width="12" height="17"><use href="#calc"/></svg><svg width="16" height="16"><use href="#calcg"/></svg></div>
   </div>
   <div class="glab">Cálculo</div>
  </div>
  <svg width="11" height="7" class="chev"><use href="#up"/></svg>
 </div>
 <div class="fbar d-flex">
  <div class="namebox d-flex align-items-center justify-content-end"><span class="crt"></span></div>
  <div class="dots3 d-flex align-items-center justify-content-center"><svg width="3" height="13"><use href="#vd3"/></svg></div>
  <div class="fxbox d-flex align-items-center justify-content-between"><svg width="12" height="12" class="fx-i"><use href="#x"/></svg><svg width="14" height="12" class="fx-i"><use href="#chk"/></svg><span class="fxsm">fx</span></div>
  <div class="finput d-flex align-items-center justify-content-end"><span class="crt"></span></div>
 </div>
 <div class="sheetwrap d-flex">
  <div class="xclip">
  <table class="xg xa">
  <colgroup><col><col><col><col><col><col><col><col><col><col><col><col><col><col></colgroup>
  <tr class="h14"><th class="ch"></th><th class="ch">B</th><th class="ch">C</th><th class="ch">D</th><th class="ch">E</th><th class="ch">F</th><th class="ch">G</th><th class="ch">H</th><th class="ch">I</th><th class="ch">J</th><th class="ch">K</th><th class="ch">L</th><th class="ch">M</th><th class="ch">N</th></tr>
  <tr class="h31"><th class="rh">2</th><td></td><td></td><td></td><td></td><td></td><td></td><td></td><td></td><td></td><td></td><td></td><td></td><td></td></tr>
  <tr class="h31"><th class="rh">3</th><td></td><td></td><td class="nm pnk">1</td><td></td><td></td><td></td><td></td><td></td><td></td><td></td><td></td><td colspan="2" class="hd gry">Pistas</td></tr>
  <tr class="h34"><th class="rh">4</th><td></td><td></td><td class="lt bx">a</td><td></td><td></td><td class="nm org">4</td><td></td><td class="nm blu">3</td><td></td><td></td><td></td><td rowspan="2" class="nm pnk">1</td><td rowspan="2" class="tx">Tipo de campaña recomendada para aquellas<br>marcas que deseen que su anuncio, llegue a la<br>mayor cantidad de personas posibles.</td></tr>
  <tr class="h34"><th class="rh">5</th><td class="nm pur">2</td><td class="lt bx">a</td><td class="lt bx">l</td><td class="lt bx">g</td><td class="lt bx">o</td><td class="lt bx">r</td><td class="lt bx">i</td><td class="lt bx">t</td><td class="lt bx">m</td><td class="lt bx">o</td><td></td></tr>
  <tr class="h34"><th class="rh">6</th><td></td><td></td><td class="lt bx">c</td><td></td><td></td><td class="lt bx">o</td><td></td><td class="lt bx">r</td><td></td><td></td><td></td><td rowspan="2" class="nm pur">2</td><td rowspan="2" class="tx">Conjunto ordenado de operaciones sistemáticas<br>que permite hacer un cálculo y hallar la solución de<br>un tipo de problemas.</td></tr>
  <tr class="h34"><th class="rh">7</th><td></td><td></td><td class="lt bx">a</td><td></td><td></td><td class="lt bx">l</td><td></td><td class="lt bx">a</td><td></td><td></td><td></td></tr>
  <tr class="h34"><th class="rh">8</th><td></td><td></td><td class="lt bx">n</td><td></td><td></td><td class="lt bx">e</td><td></td><td class="lt bx">f</td><td></td><td></td><td></td><td rowspan="2" class="nm blu">3</td><td rowspan="2" class="tx">Tipo de campaña cuyo objetivo es dirigir a las<br>personas a un destino, como un sitio web, una app<br>o una conversación de Messenger.</td></tr>
  <tr class="h34"><th class="rh">9</th><td></td><td></td><td class="lt bx">c</td><td></td><td></td><td class="lt bx">s</td><td></td><td class="lt bx">i</td><td></td><td></td><td></td></tr>
  <tr class="h34"><th class="rh">10</th><td></td><td></td><td class="lt bx">e</td><td></td><td></td><td></td><td></td><td class="lt bx">c</td><td></td><td></td><td></td><td rowspan="2" class="nm org">4</td><td rowspan="2" class="tx">Variable que podemos administrar al utilizar<br>Business Manager. Refiere al nivel de acceso a la<br>información de las personas que forman parte del<br>negocio.</td></tr>
  <tr class="h34"><th class="rh">11</th><td></td><td></td><td></td><td></td><td></td><td></td><td></td><td class="lt bx">o</td><td></td><td></td><td></td></tr>
  <tr class="h14"><th class="rh">12</th><td></td><td></td><td></td><td></td><td></td><td></td><td></td><td></td><td></td><td></td><td></td><td></td><td></td></tr>
  <tr class="h14"><th class="rh">13</th><td></td><td></td><td></td><td></td><td></td><td></td><td></td><td></td><td></td><td></td><td></td><td></td><td></td></tr>
  <tr class="h14"><th class="rh">14</th><td></td><td></td><td></td><td></td><td></td><td></td><td></td><td></td><td></td><td></td><td></td><td></td><td></td></tr>
  <tr class="h14"><th class="rh">15</th><td></td><td></td><td></td><td></td><td></td><td></td><td></td><td></td><td></td><td></td><td></td><td></td><td></td></tr>
  <tr class="h14"><th class="rh">16</th><td></td><td></td><td></td><td></td><td></td><td></td><td></td><td></td><td></td><td></td><td></td><td></td><td></td></tr>
  <tr class="h14"><th class="rh">17</th><td></td><td></td><td></td><td></td><td></td><td></td><td></td><td></td><td></td><td></td><td></td><td></td><td></td></tr>
  <tr class="h14"><th class="rh">18</th><td></td><td></td><td></td><td></td><td></td><td></td><td></td><td></td><td></td><td></td><td></td><td></td><td></td></tr>
  <tr class="h14"><th class="rh">19</th><td></td><td></td><td></td><td></td><td></td><td></td><td></td><td></td><td></td><td></td><td></td><td></td><td></td></tr>
  <tr class="h14"><th class="rh">20</th><td></td><td></td><td></td><td></td><td></td><td></td><td></td><td></td><td></td><td></td><td></td><td></td><td></td></tr>
  </table>
  </div>
  <div class="vbar d-flex flex-column">
   <div class="sbtn d-flex align-items-center justify-content-center"><span class="tri-u"></span></div>
   <div class="vthumb vt-a"></div>
   <div class="spacer"></div>
   <div class="sbtn d-flex align-items-center justify-content-center"><span class="tri-d"></span></div>
  </div>
 </div>
 <div class="tabbar d-flex align-items-center">
  <div class="arrsx d-flex align-items-center"><span class="tri-l tfd"></span><span class="tri-r tgo"></span></div>
  <div class="stab st-a"><span>1. Crucigrama</span></div>
  <div class="gtab">2. Juego de ordenar letras</div>
  <div class="ell ell-a">...</div>
  <div class="plus">+</div>
  <svg width="3" height="13" class="dotsv dv-a"><use href="#vd3"/></svg>
  <div class="hsb d-flex">
   <div class="hsb-btn d-flex align-items-center justify-content-center"><span class="tri-l"></span></div>
   <div class="hthumb ht-a"></div>
   <div class="hsb-btn d-flex align-items-center justify-content-center"><span class="tri-r"></span></div>
  </div>
 </div>
 <div class="stbar d-flex align-items-center">
  <span class="ps-2">Listo</span><svg width="13" height="15" class="mcr-i"><use href="#mcr"/></svg>
  <div class="spacer"></div>
  <div class="vw vw-on d-flex align-items-center justify-content-center"><svg width="15" height="15"><use href="#vnorm"/></svg></div>
  <div class="vw d-flex align-items-center justify-content-center"><svg width="15" height="15"><use href="#vpage"/></svg></div>
  <div class="vw d-flex align-items-center justify-content-center"><svg width="15" height="15"><use href="#vbrk"/></svg></div>
  <span class="zm">−</span><div class="slider"><span class="slthumb"></span><span class="sltick"></span></div><span class="zp">+</span><span class="zv">85 %</span>
 </div>
</section>

<!-- RIGHT WINDOW -->
<section class="win win-b d-flex flex-column">
 <div class="ttlbar d-flex align-items-center">
  <div class="qat d-flex align-items-center">
   <svg width="15" height="15"><use href="#save"/></svg>
   <svg width="15" height="15" class="text-white ms-3"><use href="#undo"/></svg>
   <span class="crt ms-1 wcrt"></span>
   <svg width="15" height="15" class="ms-2 fade-g"><use href="#redo"/></svg>
   <span class="crt ms-1 fade-c"></span>
   <svg width="9" height="9" class="ms-3"><use href="#qatc"/></svg>
  </div>
  <div class="ttl ttl-b">17 platzidoro-crucigrama_7efbd60a-8cf8-4f5d-...</div>
  <div class="signin">Inic. ses.</div>
  <div class="wbtn d-flex align-items-center justify-content-center"><svg width="14" height="14" class="text-white"><use href="#ribd"/></svg></div>
  <div class="wbtn d-flex align-items-center justify-content-center"><svg width="11" height="2"><rect width="11" height="1" fill="#fff"/></svg></div>
  <div class="wbtn d-flex align-items-center justify-content-center"><svg width="11" height="11"><rect x=".5" y=".5" width="10" height="10" fill="none" stroke="#fff"/></svg></div>
  <div class="wbtn d-flex align-items-center justify-content-center"><svg width="11" height="11" class="text-white"><use href="#x"/></svg></div>
 </div>
 <div class="tabsx d-flex">
  <ul class="nav list-unstyled m-0">
   <li class="nav-item">Archivo</li><li class="nav-item on">Inicio</li><li class="nav-item">Inserta</li><li class="nav-item">Diseño</li><li class="nav-item">Fórmu</li><li class="nav-item">Datos</li><li class="nav-item">Revisar</li><li class="nav-item">Vista</li><li class="nav-item">Program</li><li class="nav-item">Ayuda</li><li class="nav-item">Power</li>
  </ul>
  <div class="srch d-flex align-items-center"><svg width="16" height="16"><use href="#lens"/></svg><span>Buscar</span></div>
  <div class="shr d-flex align-items-center"><svg width="18" height="20"><use href="#user"/></svg><span>Compartir</span></div>
 </div>
 <div class="rib d-flex">
  <div class="grp g5">
   <div class="gbody d-flex">
    <div class="col-paste big"><svg width="28" height="30" class="d-block paste-i"><use href="#paste"/></svg>Pegar<br><span class="crt"></span></div>
    <div class="stack">
     <div class="rrow d-flex align-items-center"><svg width="14" height="15"><use href="#scis"/></svg></div>
     <div class="rrow d-flex align-items-center"><svg width="15" height="15"><use href="#copy"/></svg><span class="crt ms-1"></span></div>
     <div class="rrow d-flex align-items-center"><svg width="17" height="15"><use href="#brush"/></svg></div>
    </div>
   </div>
   <div class="glab text-start ps-1">Portapapeles</div>
   <svg width="9" height="9" class="lnch"><use href="#launch"/></svg>
  </div>
  <div class="grp g6 ps-1">
   <div class="gbody">
    <div class="d-flex"><div class="combo cb-a d-flex align-items-center justify-content-between"><span>Arial</span><span class="crt"></span></div><div class="combo cb-b d-flex align-items-center justify-content-between"><span>15</span><span class="crt"></span></div></div>
    <div class="d-flex align-items-center"><span class="fbtn fn">N</span><span class="fbtn fk">K</span><span class="fbtn fs">S</span><span class="crt"></span><span class="vsep fsep1"></span><span class="fbtn fa1">A</span><svg width="6" height="4" class="fup"><path d="M0 4 3 0l3 4z" fill="#2e75b6"/></svg><span class="fbtn fa2">A</span><svg width="6" height="4" class="fup"><path d="M0 0l3 4 3-4z" fill="#2e75b6"/></svg></div>
    <div class="d-flex align-items-center rowf"><svg width="13" height="13" class="ms-1"><use href="#bord"/></svg><span class="crt crt1"></span><span class="vsep ms-2"></span><svg width="16" height="17" class="ms-2"><use href="#fill"/></svg><span class="crt ms-1"></span><svg width="16" height="17" class="ms-2"><use href="#fcol"/></svg><span class="crt ms-1"></span></div>
   </div>
   <div class="glab">Fuente</div>
   <svg width="9" height="9" class="lnch"><use href="#launch"/></svg>
  </div>
  <div class="grp g7"><div class="gbody big"><div class="bigbox"><svg width="14" height="12"><use href="#alng"/></svg></div>Alineación<br><span class="crt"></span></div></div>
  <div class="grp g8"><div class="gbody big"><div class="bigbox fs-6">%</div>Número<br><span class="crt"></span></div></div>
  <div class="grp g9 ps-2">
   <div class="gbody">
    <div class="rrow d-flex align-items-center"><svg width="15" height="15"><use href="#cfmt"/></svg><span>Formato condicional</span><span class="crt"></span></div>
    <div class="rrow d-flex align-items-center"><svg width="16" height="16"><use href="#tfmt"/></svg><span>Dar formato como tabla</span><span class="crt"></span></div>
    <div class="rrow d-flex align-items-center"><svg width="16" height="16"><use href="#sfmt"/></svg><span>Estilos de celda</span><span class="crt"></span></div>
   </div>
   <div class="glab">Estilos</div>
  </div>
  <div class="grp g10"><div class="gbody big"><div class="bigbox"><svg width="16" height="18"><use href="#cell"/></svg></div>Celdas<br><span class="crt"></span></div></div>
  <div class="grp g11"><div class="gbody big"><div class="bigbox"><svg width="16" height="16"><use href="#find"/></svg></div>Edición<br><span class="crt"></span></div></div>
  <svg width="11" height="7" class="chev"><use href="#up"/></svg>
 </div>
 <div class="fbar d-flex">
  <div class="namebox d-flex align-items-center justify-content-between"><span>J11</span><span class="crt"></span></div>
  <div class="dots3 d-flex align-items-center justify-content-center"><svg width="3" height="13"><use href="#vd3"/></svg></div>
  <div class="fxbox d-flex align-items-center justify-content-between"><svg width="12" height="12" class="fx-i"><use href="#x"/></svg><svg width="14" height="12" class="fx-i"><use href="#chk"/></svg><span class="fxsm">fx</span></div>
  <div class="finput d-flex align-items-center justify-content-between"><span>n</span><span class="crt"></span></div>
 </div>
 <div class="sheetwrap d-flex">
  <div class="xclip">
  <table class="xg xb">
  <colgroup><col><col><col><col><col><col><col><col><col><col><col></colgroup>
  <tr class="h14"><th class="ch"></th><th class="ch">B</th><th class="ch">C</th><th class="ch">D</th><th class="ch">E</th><th class="ch">F</th><th class="ch">G</th><th class="ch">H</th><th class="ch">I</th><th class="ch act">J</th><th class="ch">K</th></tr>
  <tr class="h48"><th class="rh">1</th><td colspan="10" class="ttc">Bienvenido a tu pausa Platzidoro. En este documento, encuentra una serie de palabras clave del curso que tienen las letras desordenadas<br><span class="line2">según corresponda, de manera que la palabra se ajuste al significado que se encuentra en la columna de la derecha. Revisa en el</span></td></tr>
  <tr class="h21"><th class="rh">2</th><td></td><td></td><td></td><td></td><td></td><td></td><td></td><td></td><td></td><td></td></tr>
  <tr class="h39"><th class="rh">3</th><td colspan="9" class="hd gy2 tt tb pal">Palabras</td><td class="hd tt tb ll cpt">Conceptos</td></tr>
  <tr class="h39"><th class="rh">4</th><td class="lt pur">M</td><td class="lt pur">E</td><td class="lt pur">L</td><td class="lt pur">I</td><td class="lt pur">I</td><td class="lt pur">T</td><td class="lt pur">N</td><td class="lt pur">E</td><td class="lt pur rr"></td><td rowspan="2" class="txk pur2 ll"><span class="mk3">Una de las ubicaciones que podemos seleccionar en Facebook</span><span class="mk165">un grupo de anuncios</span></td></tr>
  <tr class="h39"><th class="rh">5</th><td class="lt lf pur2">t</td><td class="lt lf pur2">i</td><td class="lt lf pur2">m</td><td class="lt lf pur2">e</td><td class="lt lf pur2"></td><td class="lt lf pur2">l</td><td class="lt lf pur2">i</td><td class="lt pur2">n</td><td class="lt pur2 rr">e</td></tr>
  <tr class="h39"><th class="rh">6</th><td class="lt org">E</td><td class="lt org">L</td><td class="lt org">A</td><td class="lt org">C</td><td class="lt org">D</td><td class="lt org">R</td><td class="lt org">A</td><td class="lt org">A</td><td class="lt org rr">E</td><td rowspan="2" class="txk org2 ll"><span class="mk16">Tipo de entrega de anuncios, utilizada para aquellos casos</span></td></tr>
  <tr class="h39"><th class="rh">7</th><td class="lt lf org2">a</td><td class="lt lf org2">c</td><td class="lt lf org2">e</td><td class="lt lf org2">l</td><td class="lt lf org2">e</td><td class="lt lf org2">r</td><td class="lt org2">a</td><td class="lt org2">d</td><td class="lt org2 rr">a</td></tr>
  <tr class="h39"><th class="rh">8</th><td class="lt tea">A</td><td class="lt tea">I</td><td class="lt tea">S</td><td class="lt tea">U</td><td class="lt tea">E</td><td class="lt tea">E</td><td class="lt tea">N</td><td class="lt tea">C</td><td class="lt tea rr">C</td><td rowspan="2" class="txk tea2 ll"><span class="mk22">Tipo de anuncio que permite mostrar dos o más imágenes</span></td></tr>
  <tr class="h39"><th class="rh">9</th><td class="lt lf tea2">s</td><td class="lt lf tea2">e</td><td class="lt lf tea2">c</td><td class="lt lf tea2">u</td><td class="lt lf tea2">e</td><td class="lt lf tea2">n</td><td class="lt lf tea2">c</td><td class="lt lf tea2">i</td><td class="lt tea2 rr">a</td></tr>
  <tr class="h39"><th class="rh">10</th><td class="lt yel">N</td><td class="lt yel">E</td><td class="lt yel">O</td><td class="lt yel">I</td><td class="lt yel">S</td><td class="lt yel">P</td><td class="lt yel">M</td><td class="lt yel">I</td><td class="lt yel rr">R</td><td rowspan="2" class="txk yel2 ll"><span class="mk5">Variable que nos indica la cantidad de veces que nuestro anuncio</span><span class="mk116">durante un período de tiempo</span></td></tr>
  <tr class="h39"><th class="rh act">11</th><td class="lt lf yel2 tb">i</td><td class="lt lf yel2 tb">m</td><td class="lt lf yel2 tb">p</td><td class="lt lf yel2 tb">r</td><td class="lt lf yel2 tb">e</td><td class="lt lf yel2 tb">s</td><td class="lt yel2 tb">i</td><td class="lt yel2 tb">o</td><td class="lt yel2 tb rr sel"><span class="selwrap">n</span><span class="handle"></span></td></tr>
  <tr class="h39"><th class="rh">12</th><td></td><td></td><td></td><td></td><td></td><td></td><td></td><td></td><td></td><td></td></tr>
  </table>
  </div>
  <div class="vbar d-flex flex-column">
   <div class="sbtn d-flex align-items-center justify-content-center"><span class="tri-u"></span></div>
   <div class="vthumb vt-b"></div>
   <div class="spacer"></div>
   <div class="sbtn d-flex align-items-center justify-content-center"><span class="tri-d"></span></div>
  </div>
 </div>
 <div class="tabbar d-flex align-items-center">
  <div class="arrsx d-flex align-items-center"><span class="tri-l tgo"></span><span class="tri-r tfd"></span><span class="ell">...</span></div>
  <div class="stab st-b"><span>2. Juego de ordenar letras</span></div>
  <div class="plus pl-b">+</div>
  <svg width="3" height="13" class="dotsv dv-b"><use href="#vd3"/></svg>
  <div class="hsb d-flex">
   <div class="hsb-btn d-flex align-items-center justify-content-center"><span class="tri-l"></span></div>
   <div class="hthumb ht-b"></div>
   <div class="hsb-btn d-flex align-items-center justify-content-center"><span class="tri-r"></span></div>
  </div>
 </div>
 <div class="stbar d-flex align-items-center">
  <span class="ps-2">Listo</span><svg width="13" height="15" class="mcr-i"><use href="#mcr"/></svg>
  <div class="spacer"></div>
  <div class="vw vw-on d-flex align-items-center justify-content-center"><svg width="15" height="15"><use href="#vnorm"/></svg></div>
  <div class="vw d-flex align-items-center justify-content-center"><svg width="15" height="15"><use href="#vpage"/></svg></div>
  <div class="vw d-flex align-items-center justify-content-center"><svg width="15" height="15"><use href="#vbrk"/></svg></div>
  <span class="zm">−</span><div class="slider"><span class="slthumb"></span><span class="sltick"></span></div><span class="zp">+</span><span class="zv">85 %</span>
 </div>
</section>
</div>

<footer class="taskb d-flex align-items-center">
 <div class="tk d-flex align-items-center justify-content-center"><svg width="16" height="16"><use href="#winl"/></svg></div>
 <div class="tk d-flex align-items-center justify-content-center"><svg width="16" height="16"><use href="#srch"/></svg></div>
 <div class="tk d-flex align-items-center justify-content-center"><svg width="16" height="16"><use href="#tv"/></svg></div>
 <div class="tk tk-u tk-m3 d-flex align-items-center justify-content-center"><svg width="22" height="20"><use href="#fold"/></svg></div>
 <div class="tk tk-u tk-m1 d-flex align-items-center justify-content-center"><svg width="24" height="24"><use href="#ffx"/></svg></div>
 <div class="tk tk-u tk-on d-flex align-items-center justify-content-center"><svg width="24" height="24"><use href="#xls"/><text x="7" y="16.500" text-anchor="middle" font-size="11" font-weight="700" font-family="Liberation Sans" fill="#fff">X</text></svg></div>
 <div class="tk tk-m1 d-flex align-items-center justify-content-center"><svg width="24" height="24"><use href="#wrd"/><text x="7" y="16.500" text-anchor="middle" font-size="10" font-weight="700" font-family="Liberation Sans" fill="#fff">W</text></svg></div>
 <div class="tk tk-u tk-m1 d-flex align-items-center justify-content-center"><svg width="24" height="24"><use href="#acro"/></svg></div>
 <div class="spacer"></div>
 <div class="tray d-flex align-items-center">
  <svg width="13" height="8" class="tr-a"><path d="M1 7 6.500 1.500 12 7" fill="none" stroke="#fff" stroke-width="1.200"/></svg>
  <svg width="16" height="16" class="tr-b"><use href="#spk"/></svg>
  <svg width="17" height="15" class="tr-c"><use href="#plug"/></svg>
  <svg width="14" height="14" class="tr-c"><use href="#wifi"/></svg>
  <span class="esp">ESP</span>
  <div class="clock">11:55 p.m.<br>22/07/2020</div>
  <div class="ntf d-flex align-items-center justify-content-center"><svg width="16" height="14" class="mb-2"><use href="#note"/></svg><span class="ntfb">1</span></div>
 </div>
</footer>

<div class="wm"><svg class="wmd" width="80" height="78"><path d="M40 2 78 39 40 76 2 39 28 14 40 26 26 39 40 52 52 39 40 26" fill="none" stroke="rgba(120,190,60,.13)" stroke-width="13"/></svg><span class="wmt">Platzi</span></div>
</body>
</html>
